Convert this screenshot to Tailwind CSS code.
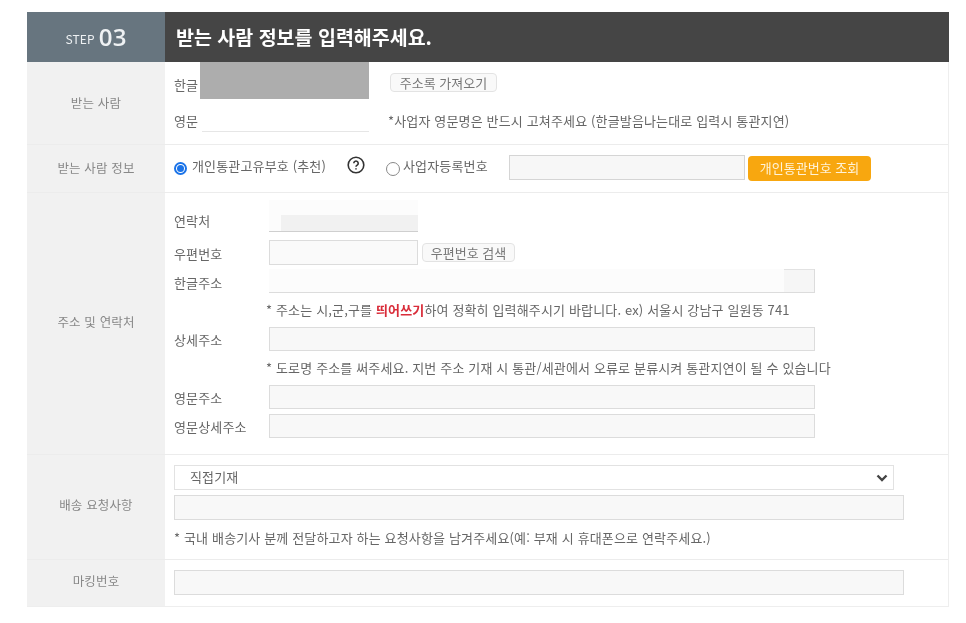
<!DOCTYPE html>
<html lang="ko">
<head>
  <meta charset="UTF-8" />
  <title>받는 사람 정보</title>
  <script src="https://cdn.jsdelivr.net/npm/@tailwindcss/browser@4"></script>
</head>
<body class="bg-white font-['Noto_Sans_CJK_KR','Noto_Sans',sans-serif] text-[13px] tracking-[0.15px] text-[#666]">
  <div class="blur-[0.6px] pt-3 pl-[27px] w-[949px]">

    <!-- Header -->
    <div class="flex h-[50px]">
      <div class="w-[138px] bg-[#67757f] text-[#eef1f3] flex items-center justify-center gap-1">
        <span class="text-[12px] mt-1">STEP</span>
        <span class="font-['Open_Sans',sans-serif] text-[24px] font-semibold">03</span>
      </div>
      <div class="flex-1 bg-[#454545] text-white text-[19.5px] tracking-normal font-bold pl-[11px] flex items-center">받는 사람 정보를 입력해주세요.</div>
    </div>

    <div class="border-r border-b border-[#eee]">
      <!-- 받는 사람 -->
      <div class="flex h-[83px] border-b border-[#ececec]">
        <div class="w-[138px] shrink-0 bg-[#f1f1f1] flex items-center justify-center text-[12.5px] text-[#888]">받는 사람</div>
        <div class="pl-[9px] flex-1">
          <div class="flex items-start h-[47px]">
            <span class="w-[26px] mt-[13px] whitespace-nowrap">한글</span>
            <div class="w-[169px] h-[37px] bg-[#adadad]"></div>
            <button class="ml-[21px] mt-[11px] w-[107px] h-[19px] border border-[#e3e3e3] bg-[#f9f9f9] rounded-sm tracking-normal leading-none text-[#777]">주소록 가져오기</button>
          </div>
          <div class="flex items-start">
            <span class="w-[28px] mt-[2px] whitespace-nowrap">영문</span>
            <div class="w-[167px] h-[23px] border-b border-[#e6e6e6]"></div>
            <span class="ml-[19px] mt-[2px] whitespace-nowrap">*사업자 영문명은 반드시 고쳐주세요 (한글발음나는대로 입력시 통관지연)</span>
          </div>
        </div>
      </div>

      <!-- 받는 사람 정보 -->
      <div class="flex h-[48px] border-b border-[#ececec]">
        <div class="w-[138px] shrink-0 bg-[#f1f1f1] flex items-center justify-center text-[12.5px] text-[#888]">받는 사람 정보</div>
        <div class="pl-[9px] pb-[3px] flex items-center flex-1">
          <span class="mt-[3px] w-[13px] h-[13px] rounded-full border-2 border-[#1a73e8] flex items-center justify-center"><span class="w-[7px] h-[7px] rounded-full bg-[#1a73e8]"></span></span>
          <span class="ml-[5px] w-[134px] mb-[2px] whitespace-nowrap">개인통관고유부호 (추천)</span>
          <svg class="ml-[21px] mb-[4px]" width="18" height="18" viewBox="0 0 18 18" fill="none" stroke="#333" stroke-width="1.6">
            <circle cx="9" cy="9" r="7.8" />
            <path d="M6.8 7.2a2.2 2.2 0 1 1 3.4 1.9c-.8.5-1.2.9-1.2 1.7" />
            <path d="M9 12.3v1.2" />
          </svg>
          <span class="ml-[21px] mt-[4px] w-[14px] h-[14px] rounded-full border border-[#888]"></span>
          <span class="ml-[3px] w-[85px] mb-[2px] whitespace-nowrap">사업자등록번호</span>
          <div class="ml-[21px] w-[236px] h-[25px] border border-[#d5d5d5] bg-[#f7f7f7]"></div>
          <button class="ml-[3px] mt-[2px] w-[123px] h-[25px] bg-[#f8a70f] rounded-sm text-[#fff3d8] tracking-normal">개인통관번호 조회</button>
        </div>
      </div>

      <!-- 주소 및 연락처 -->
      <div class="flex h-[262px] border-b border-[#ececec]">
        <div class="w-[138px] shrink-0 bg-[#f1f1f1] pb-[2px] flex items-center justify-center text-[12.5px] text-[#888]">주소 및 연락처</div>
        <div class="pl-[9px] flex-1">
          <div class="flex items-end h-[39px]">
            <span class="w-[95px] self-center mt-[17px]">연락처</span>
            <div class="w-[149px] h-[32px] bg-[#fcfcfc] border-b border-[#cfcfcf] flex items-end justify-end">
              <div class="w-[137px] h-[16px] bg-[#f1f1f1]"></div>
            </div>
          </div>
          <div class="flex items-center h-[25px] mt-[8px]">
            <span class="w-[95px] mt-[2px]">우편번호</span>
            <div class="w-[149px] h-[25px] border border-[#dcdcdc] bg-[#fafafa]"></div>
            <button class="ml-[4px] w-[93px] h-[19px] border border-[#e3e3e3] bg-[#f9f9f9] rounded-sm tracking-normal leading-none text-[#777]">우편번호 검색</button>
          </div>
          <div class="flex items-center h-[24px] mt-[4px]">
            <span class="w-[95px] mt-[4px]">한글주소</span>
            <div class="w-[546px] h-[24px] border-b border-r border-[#dcdcdc] bg-[#fcfcfc] flex justify-end">
              <div class="w-[30px] bg-[#f6f6f6] border-t border-[#e2e2e2]"></div>
            </div>
          </div>
          <p class="ml-[92px] mt-[8px] h-[26px] leading-[18px] whitespace-nowrap">* 주소는 시,군,구를 <b class="text-[#d92d3a] font-bold">띄어쓰기</b>하여 정확히 입력해주시기 바랍니다. ex) 서울시 강남구 일원동 741</p>
          <div class="flex items-center h-[24px]">
            <span class="w-[95px] mt-[2px]">상세주소</span>
            <div class="w-[546px] h-[24px] border border-[#dcdcdc] bg-[#f8f8f8]"></div>
          </div>
          <p class="ml-[92px] mt-[8px] h-[26px] leading-[18px] whitespace-nowrap">* 도로명 주소를 써주세요. 지번 주소 기재 시 통관/세관에서 오류로 분류시켜 통관지연이 될 수 있습니다</p>
          <div class="flex items-center h-[24px]">
            <span class="w-[95px] mt-[2px]">영문주소</span>
            <div class="w-[546px] h-[24px] border border-[#dcdcdc] bg-[#f8f8f8]"></div>
          </div>
          <div class="flex items-center h-[24px] mt-[5px]">
            <span class="w-[95px] mt-[2px] whitespace-nowrap">영문상세주소</span>
            <div class="w-[546px] h-[24px] border border-[#dcdcdc] bg-[#f8f8f8]"></div>
          </div>
        </div>
      </div>

      <!-- 배송 요청사항 -->
      <div class="flex h-[105px] border-b border-[#ececec]">
        <div class="w-[138px] shrink-0 bg-[#f1f1f1] pb-[3px] flex items-center justify-center text-[12.5px] text-[#888]">배송 요청사항</div>
        <div class="pl-[9px] pt-[10px] flex-1">
          <div class="w-[720px] h-[25px] border border-[#e2e2e2] bg-white flex items-center justify-between pl-[15px] pr-[4px]">
            <span class="mb-px">직접기재</span>
            <svg width="14" height="10" viewBox="0 0 14 10" fill="none" stroke="#444" stroke-width="2.4"><path d="M2.5 2.500 7 7l4.500-4.500" /></svg>
          </div>
          <div class="mt-[5px] w-[730px] h-[25px] border border-[#dcdcdc] bg-[#f8f8f8]"></div>
          <p class="mt-[9px] leading-[18px] whitespace-nowrap">* 국내 배송기사 분께 전달하고자 하는 요청사항을 남겨주세요(예: 부재 시 휴대폰으로 연락주세요.)</p>
        </div>
      </div>

      <!-- 마킹번호 -->
      <div class="flex h-[46px]">
        <div class="w-[138px] shrink-0 bg-[#f1f1f1] pb-[3px] flex items-center justify-center text-[12.5px] text-[#888]">마킹번호</div>
        <div class="pl-[9px] pt-[10px] flex-1">
          <div class="w-[730px] h-[25px] border border-[#dcdcdc] bg-[#f8f8f8]"></div>
        </div>
      </div>
    </div>
  </div>
</body>
</html>
